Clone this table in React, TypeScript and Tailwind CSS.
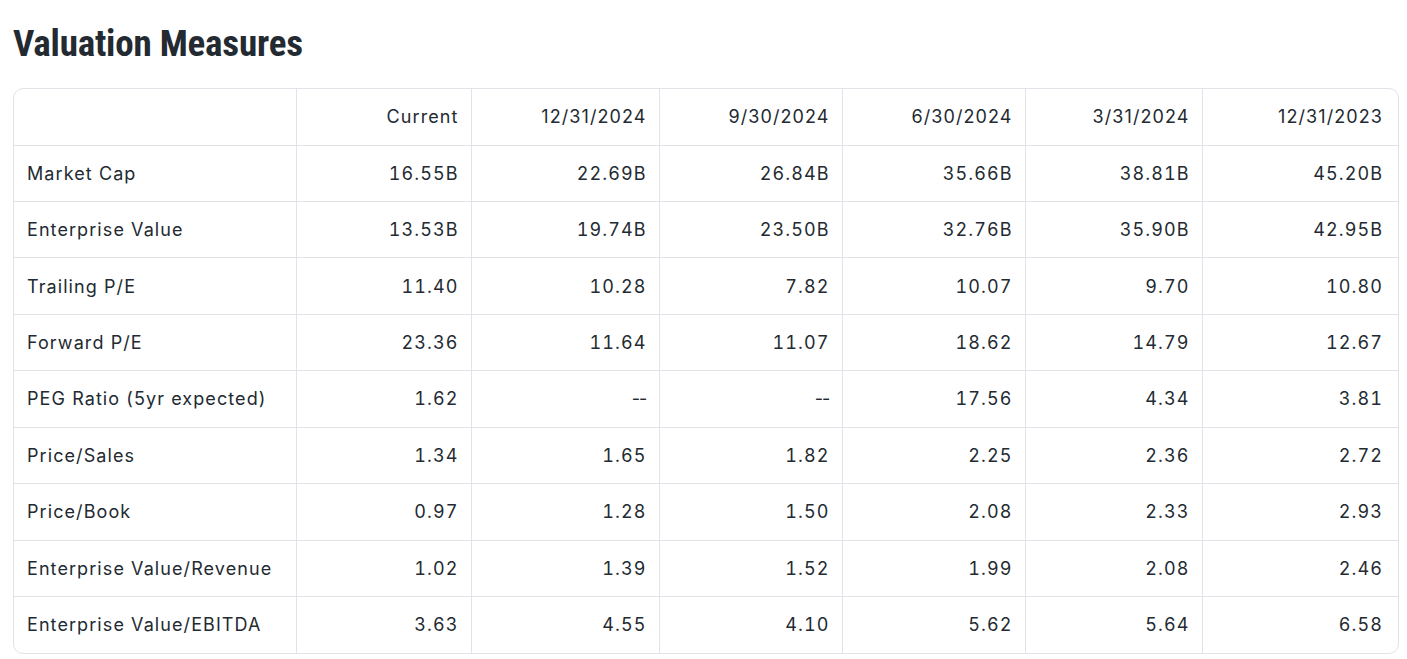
const columns = ["Current", "12/31/2024", "9/30/2024", "6/30/2024", "3/31/2024", "12/31/2023"];

const rows: [string, string[]][] = [
  ["Market Cap", ["16.55B", "22.69B", "26.84B", "35.66B", "38.81B", "45.20B"]],
  ["Enterprise Value", ["13.53B", "19.74B", "23.50B", "32.76B", "35.90B", "42.95B"]],
  ["Trailing P/E", ["11.40", "10.28", "7.82", "10.07", "9.70", "10.80"]],
  ["Forward P/E", ["23.36", "11.64", "11.07", "18.62", "14.79", "12.67"]],
  ["PEG Ratio (5yr expected)", ["1.62", "--", "--", "17.56", "4.34", "3.81"]],
  ["Price/Sales", ["1.34", "1.65", "1.82", "2.25", "2.36", "2.72"]],
  ["Price/Book", ["0.97", "1.28", "1.50", "2.08", "2.33", "2.93"]],
  ["Enterprise Value/Revenue", ["1.02", "1.39", "1.52", "1.99", "2.08", "2.46"]],
  ["Enterprise Value/EBITDA", ["3.63", "4.55", "4.10", "5.62", "5.64", "6.58"]],
];

const widths = [282, 175, 188, 183, 183, 177, 198];

function cellClass(i: number, last: number) {
  return i < last
    ? "border-r border-[#e0e4e9] pl-[13px] pr-[12px] text-right"
    : "pl-[13px] pr-[17px] text-right";
}

export default function App() {
  return (
    <div className="min-h-screen bg-white pl-[13px] pr-[8px] text-[#232a31] [font-family:Inter,'Open_Sans',sans-serif]">
      <h2 className="pt-[22px] pb-[22px] text-[37px] font-bold leading-[44px] tracking-[-0.2px] [font-family:'Liberation_Sans_Narrow','Roboto_Condensed','Liberation_Sans',sans-serif] [font-stretch:condensed]">
        Valuation Measures
      </h2>

      <div className="overflow-hidden rounded-[10px] border border-[#e0e4e9]">
        <table className="w-full table-fixed border-collapse text-[18px] tracking-[0.06em]">
          <colgroup>
            {widths.map((w, i) => (
              <col key={i} style={{ width: `${w}px` }} />
            ))}
          </colgroup>
          <thead>
            <tr className="h-[56px]">
              <th className="border-r border-[#e0e4e9]" />
              {columns.map((c, i) => (
                <th key={c} className={`${cellClass(i, columns.length - 1)} font-normal`}>
                  {c}
                </th>
              ))}
            </tr>
          </thead>
          <tbody>
            {rows.map(([label, values]) => (
              <tr key={label} className="h-[56.45px] border-t border-[#e0e4e9]">
                <td className="border-r border-[#e0e4e9] px-[13px] text-left">{label}</td>
                {values.map((v, i) => (
                  <td key={i} className={cellClass(i, values.length - 1)}>
                    {v === "--" ? (
                      <span className="tracking-[-0.05em]">--</span>
                    ) : (
                      <span className="tabular-nums">{v}</span>
                    )}
                  </td>
                ))}
              </tr>
            ))}
          </tbody>
        </table>
      </div>
    </div>
  );
}
